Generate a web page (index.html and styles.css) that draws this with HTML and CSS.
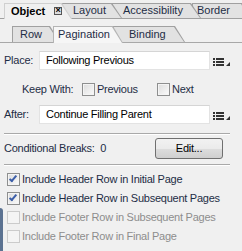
FILE: index.html
```html
<!DOCTYPE html>
<html>
<head>
    <meta charset="UTF-8">
    <title>Object - Pagination</title>
    <link rel="stylesheet" href="styles.css">
</head>
<body>

    <div class="tabs tabs-main">
        <span class="tab active tab-object">Object <span class="close">&times;</span></span>
        <span class="tab tab-layout">Layout</span>
        <span class="tab tab-access">Accessibility</span>
        <span class="tab tab-border">Border</span>
    </div>

    <div class="tabs tabs-sub">
        <span class="tab tab-row">Row</span>
        <span class="tab active tab-pagination">Pagination</span>
        <span class="tab tab-binding">Binding</span>
    </div>

    <div class="panel">

        <div class="field">
            <span class="label">Place:</span>
            <span class="input">Following Previous</span>
            <svg class="menu" width="19" height="10" viewBox="0 0 19 10">
                <rect x="0" y="1" width="2" height="2" fill="#333"/>
                <rect x="3" y="1" width="8" height="2" fill="#333"/>
                <rect x="0" y="4" width="2" height="2" fill="#333"/>
                <rect x="3" y="4" width="8" height="2" fill="#333"/>
                <rect x="0" y="7" width="2" height="2" fill="#333"/>
                <rect x="3" y="7" width="8" height="2" fill="#333"/>
                <polygon points="17,5 17,9 13,9" fill="#333"/>
            </svg>
        </div>

        <div class="keep">
            <span class="label">Keep With:</span>
            <span class="check check-prev"><span class="box"></span>Previous</span>
            <span class="check"><span class="box"></span>Next</span>
        </div>

        <div class="field">
            <span class="label">After:</span>
            <span class="input">Continue Filling Parent</span>
            <svg class="menu" width="19" height="10" viewBox="0 0 19 10">
                <rect x="0" y="1" width="2" height="2" fill="#333"/>
                <rect x="3" y="1" width="8" height="2" fill="#333"/>
                <rect x="0" y="4" width="2" height="2" fill="#333"/>
                <rect x="3" y="4" width="8" height="2" fill="#333"/>
                <rect x="0" y="7" width="2" height="2" fill="#333"/>
                <rect x="3" y="7" width="8" height="2" fill="#333"/>
                <polygon points="17,5 17,9 13,9" fill="#333"/>
            </svg>
        </div>

        <hr class="sep sep-first">

        <div class="breaks">
            <span class="label">Conditional Breaks:&nbsp; 0</span>
            <span class="button">Edit...</span>
        </div>

        <hr class="sep">

        <ul class="options">
            <li class="check"><span class="box checked"></span>Include Header Row in Initial Page</li>
            <li class="check"><span class="box checked"></span>Include Header Row in Subsequent Pages</li>
            <li class="check disabled"><span class="box"></span>Include Footer Row in Subsequent Pages</li>
            <li class="check disabled"><span class="box"></span>Include Footer Row in Final Page</li>
        </ul>

    </div>

    <span class="edge"></span>

</body>
</html>
```

FILE: styles.css
```css
html {
    box-sizing: border-box;
}

*,
*:before,
*:after {
    box-sizing: inherit;
}

body {
    margin: 0;
    height: 251px;
    overflow: hidden;
    position: relative;
    background: #f0f0f0;
    color: #1e2d45;
    font-family: "Liberation Sans", Arial, sans-serif;
    font-size: 11px;
    line-height: 13px;
}

/* tab strips */

.tabs {
    display: flex;
    align-items: flex-end;
    border-bottom: 1px solid #a0a0a0;
}

.tabs-main {
    padding: 3px 0 0 4px;
    height: 19px;
}

.tabs-sub {
    margin-top: 7px;
    padding-left: 12px;
    height: 17px;
    border-bottom-color: #a8a8a8;
}

.tab {
    position: relative;
    flex: none;
    display: flex;
    align-items: center;
    height: 15px;
    white-space: nowrap;
}

.tabs-sub .tab {
    height: 16px;
}

.tab:before,
.tab:after {
    content: '';
    position: absolute;
    z-index: -1;
}

.tab:before {
    top: 0;
    left: 0;
    right: 0;
    bottom: 0;
    background: #a0a0a0;
    clip-path: polygon( 0 0, calc( 100% - 10px ) 0, 100% 100%, 0 100% );
}

.tab:after {
    top: 1px;
    left: 1px;
    right: 1px;
    bottom: 0;
    background: #e2e2e2;
    clip-path: polygon( 0 0, calc( 100% - 10px ) 0, 100% 100%, 0 100% );
}

.tab.active {
    height: 16px;
    margin-bottom: -1px;
}

.tabs-sub .tab.active {
    height: 17px;
}

.tab.active:before {
    background: #b4b4b4;
}

.tab.active:after {
    background: #f0f0f0;
}

.tabs-sub .tab.active:after {
    background: #f6f6f6;
}

.tabs-main .tab.active:before {
    background: #d0d0d0;
}

/* tab places, earlier tabs lie over later ones */

.tab-object {
    z-index: 4;
    width: 68px;
    padding-left: 7px;
    font-weight: bold;
    color: #000;
}

.tab-layout {
    z-index: 3;
    width: 60px;
    margin-left: -10px;
    padding-left: 11px;
}

.tab-access {
    z-index: 2;
    width: 89px;
    margin-left: -10px;
    padding-left: 11px;
}

.tab-border {
    z-index: 1;
    width: 60px;
    margin-left: -9px;
    padding-left: 5px;
}

.tab-row {
    z-index: 3;
    width: 48px;
    padding-left: 8px;
}

.tab-pagination {
    z-index: 4;
    width: 70px;
    margin-left: -7px;
    padding-left: 5px;
}

.tab-binding {
    z-index: 1;
    width: 72px;
    margin-left: -10px;
    padding-left: 16px;
}

.close {
    display: inline-block;
    width: 8px;
    height: 8px;
    margin-left: 9px;
    border: 1px solid #555;
    background: #ddd;
    font-size: 9px;
    line-height: 5px;
    text-align: center;
    font-weight: bold;
}

/* panel */

.panel {
    padding: 8px 0 0 4px;
    letter-spacing: -0.25px;
}

.field {
    display: flex;
    align-items: center;
    height: 19px;
}

.field .label {
    width: 35px;
}

.input {
    width: 171px;
    height: 19px;
    padding: 2px 0 0 6px;
    background: #fff;
    border: 1px solid #e3e3e3;
    border-top-color: #d5d5d5;
    color: #000;
}

.menu {
    margin: 2px 0 0 3px;
}

.keep {
    display: flex;
    align-items: center;
    height: 15px;
    margin: 12px 0 8px 18px;
}

.keep .label {
    width: 60px;
}

.keep .check-prev {
    width: 75px;
}

.check {
    display: flex;
    align-items: center;
}

.box {
    display: inline-block;
    flex: none;
    width: 13px;
    height: 13px;
    margin-right: 2px;
    border: 1px solid #8e8f8f;
    background: linear-gradient( 135deg, #dcdcdc, #fbfbfb );
    box-shadow: inset 0 0 0 1px #f4f4f4;
}

.box.checked {
    position: relative;
}

.box.checked:after {
    content: '';
    position: absolute;
    left: 3px;
    top: 0;
    width: 4px;
    height: 8px;
    border-right: 2px solid #3c5ea8;
    border-bottom: 2px solid #3c5ea8;
    transform: rotate( 40deg );
}

.check.disabled {
    color: #8d8d8d;
}

.check.disabled .box {
    border-color: #cbcbcb;
    background: #f4f4f4;
    box-shadow: none;
}

.sep {
    margin: 0;
    width: 226px;
    border: 0;
    border-top: 1px solid #a9a9a9;
    border-bottom: 1px solid #fff;
}

.sep-first {
    margin-top: 9px;
}

.breaks {
    display: flex;
    align-items: center;
    justify-content: space-between;
    width: 219px;
    height: 21px;
    margin: 3px 0 5px;
}

.button {
    width: 68px;
    height: 21px;
    border: 1px solid #707070;
    border-radius: 3px;
    background: linear-gradient( #f2f2f2 0, #ebebeb 50%, #dddddd 51%, #cfcfcf 100% );
    color: #000;
    text-align: center;
    line-height: 19px;
}

.options {
    list-style: none;
    margin: 4px 0 0 3px;
    padding: 0;
}

.options li {
    height: 19px;
}

.edge {
    position: absolute;
    left: 0;
    top: 208px;
    width: 3px;
    height: 43px;
    background: #5b7291;
    border-radius: 0 3px 0 0;
}
```
